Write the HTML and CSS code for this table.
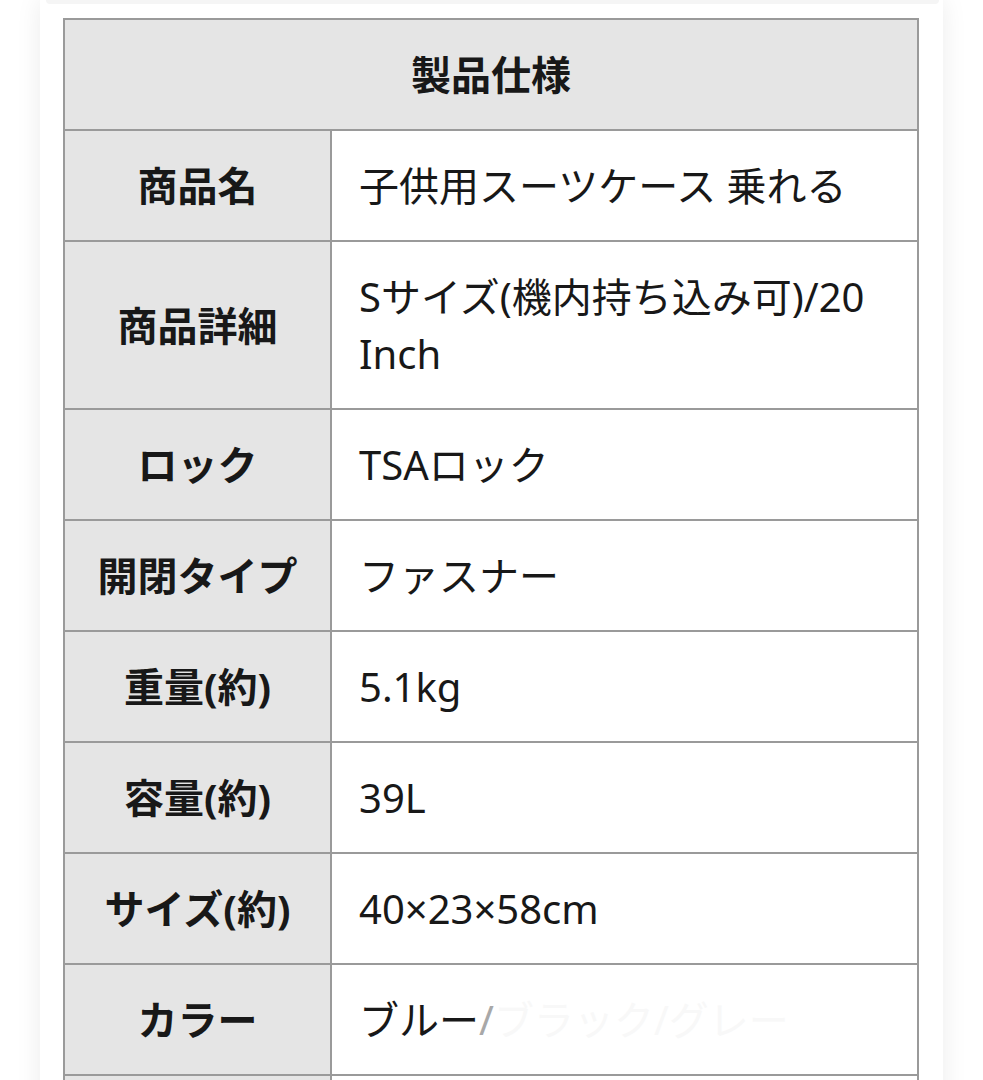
FILE: index.html
```html
<!DOCTYPE html>
<html lang="ja">
<head>
<meta charset="utf-8">
<title>製品仕様</title>
<link rel="stylesheet" href="styles.css">
</head>
<body>
<div class="page">
  <div class="card">
    <div class="card-top"></div>
    <table class="spec">
      <colgroup><col class="col-label"><col class="col-value"></colgroup>
      <thead>
        <tr><th colspan="2" class="head">製品仕様</th></tr>
      </thead>
      <tbody>
        <tr><th>商品名</th><td>子供用スーツケース 乗れる</td></tr>
        <tr><th>商品詳細</th><td>Sサイズ(機内持ち込み可)/20 Inch</td></tr>
        <tr><th>ロック</th><td>TSAロック</td></tr>
        <tr><th>開閉タイプ</th><td>ファスナー</td></tr>
        <tr><th>重量(約)</th><td>5.1kg</td></tr>
        <tr><th>容量(約)</th><td>39L</td></tr>
        <tr><th>サイズ(約)</th><td>40×23×58cm</td></tr>
        <tr><th>カラー</th><td>ブルー<span class="slash">/</span><span class="faded">ブラック/グレー</span></td></tr>
        <tr class="empty"><th></th><td></td></tr>
      </tbody>
    </table>
  </div>
</div>
</body>
</html>
```
FILE: styles.css
```css
html, body {
  margin: 0;
  padding: 0;
  background: #ffffff;
  overflow: hidden;
}
body {
  font-family: "Noto Sans", "Noto Sans CJK JP", sans-serif;
  color: #181818;
}
.page {
  padding: 0 40px;
}
.card {
  background: #ffffff;
  box-shadow: 0 0 24px rgba(0, 0, 0, 0.08);
  padding: 0 0 0 23px;
  min-height: 1100px;
}
.card-top {
  height: 4px;
  margin: 0 4px 14px -17px;
  background: #f5f5f5;
  border-radius: 0 0 10px 10px;
}
.spec {
  border-collapse: collapse;
  table-layout: fixed;
  width: 856px;
}
.col-label {
  width: 267px;
}
.spec th, .spec td {
  border: 2px solid #9a9a9a;
  font-size: 40px;
  line-height: 57px;
  padding: 26px 26px;
}
.spec th {
  background: #e5e5e5;
  font-weight: 700;
  text-align: center;
  padding-left: 4px;
  padding-right: 4px;
  white-space: nowrap;
}
.spec td {
  background: #ffffff;
  font-weight: 400;
  text-align: left;
  padding-left: 27px;
}
.spec .empty th, .spec .empty td {
  height: 57px;
}
.spec .head {
  text-align: center;
}
.slash {
  color: #a8a8a8;
}
.faded {
  color: #f8f8f8;
}
```
